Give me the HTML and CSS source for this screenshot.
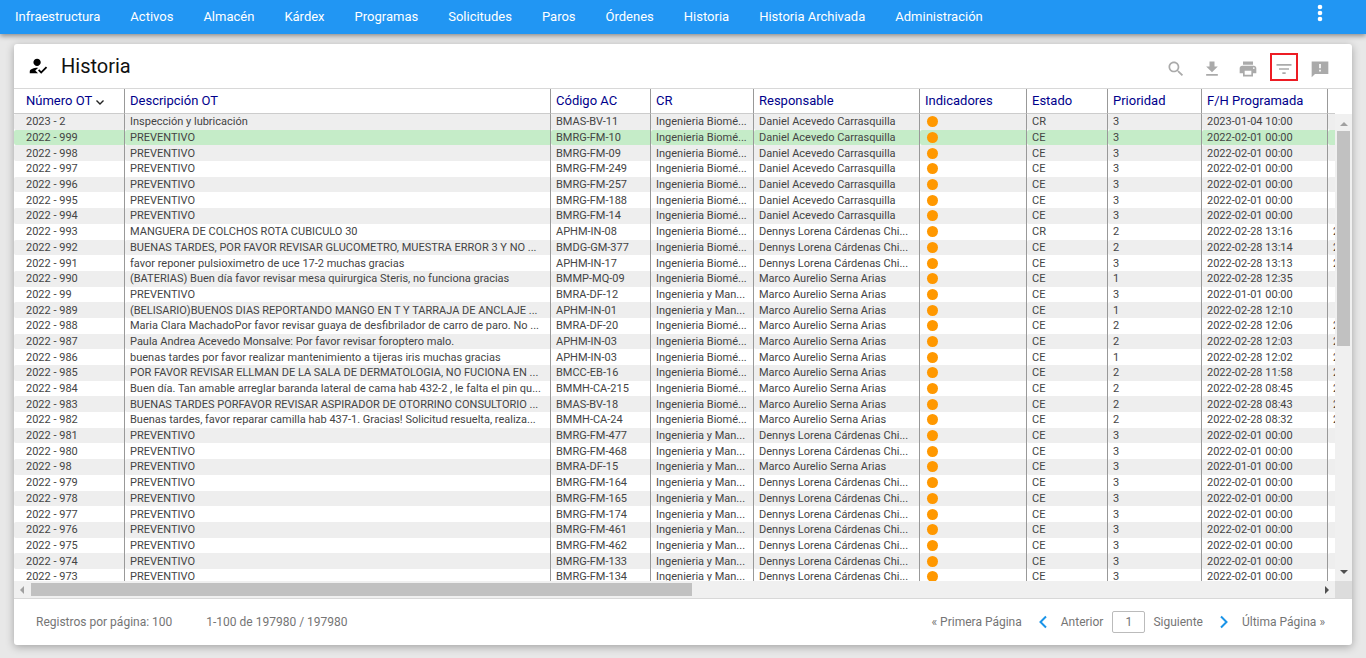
FILE: index.html
```html
<!DOCTYPE html>
<html lang="es">

<head>
    <meta charset="UTF-8">
    <meta name="viewport" content="width=device-width, initial-scale=1.0">
    <title>Historia</title>
    <link rel="stylesheet" href="styles.css">
</head>

<body>
    <nav class="navbar">
        <a href="#">Infraestructura</a>
        <a href="#">Activos</a>
        <a href="#">Almacén</a>
        <a href="#">Kárdex</a>
        <a href="#">Programas</a>
        <a href="#">Solicitudes</a>
        <a href="#">Paros</a>
        <a href="#">Órdenes</a>
        <a href="#">Historia</a>
        <a href="#">Historia Archivada</a>
        <a href="#">Administración</a>
        <button class="more-btn" aria-label="Más opciones">
            <svg width="24" height="24" viewBox="0 0 24 24" fill="currentColor"><circle cx="12" cy="6" r="2.3"/><circle cx="12" cy="12" r="2.3"/><circle cx="12" cy="18" r="2.3"/></svg>
        </button>
    </nav>

    <main class="card">
        <header class="card-header">
            <svg class="title-icon" width="22" height="22" viewBox="0 0 24 24"><path d="M9 17l3-2.94c-.39-.04-.68-.06-1-.06-2.67 0-8 1.34-8 4v2h9l-3-3zm2-5c2.21 0 4-1.79 4-4s-1.79-4-4-4-4 1.79-4 4 1.79 4 4 4zM15.47 20.5L12 17l1.4-1.41 2.07 2.08 5.13-5.17 1.4 1.41z"/></svg>
            <h1>Historia</h1>
            <div class="tools">
                <button class="tool-btn" aria-label="Buscar">
                    <svg viewBox="0 0 24 24"><path d="M15.5 14h-.79l-.28-.27C15.41 12.59 16 11.11 16 9.5 16 5.91 13.09 3 9.5 3S3 5.91 3 9.5 5.91 16 9.5 16c1.61 0 3.09-.59 4.23-1.57l.27.28v.79l5 4.99L20.49 19l-4.99-5zm-6 0C7.01 14 5 11.99 5 9.5S7.01 5 9.5 5 14 7.01 14 9.5 11.99 14 9.5 14z"/></svg>
                </button>
                <button class="tool-btn" aria-label="Descargar">
                    <svg viewBox="0 0 24 24"><path d="M19 9h-4V3H9v6H5l7 7 7-7zM5 18v2h14v-2H5z"/></svg>
                </button>
                <button class="tool-btn" aria-label="Imprimir">
                    <svg viewBox="0 0 24 24"><path d="M19 8H5c-1.66 0-3 1.34-3 3v6h4v4h12v-4h4v-6c0-1.66-1.34-3-3-3zm-3 11H8v-5h8v5zm3-7c-.55 0-1-.45-1-1s.45-1 1-1 1 .45 1 1-.45 1-1 1zm-1-9H6v4h12V3z"/></svg>
                </button>
                <button class="tool-btn marked" aria-label="Filtrar">
                    <svg viewBox="0 0 24 24"><path d="M10 18h4v-2h-4v2zM3 6v2h18V6H3zm3 7h12v-2H6v2z"/></svg>
                </button>
                <button class="tool-btn" aria-label="Comentarios">
                    <svg viewBox="0 0 24 24"><path d="M22 3H2v19l4-4h16V3zm-9 12h-2v-2h2v2zm0-4h-2V6h2v5z"/></svg>
                </button>
            </div>
        </header>

        <div class="grid">
            <div class="grid-view">
                <table>
                    <colgroup>
                        <col class="col-ot">
                        <col>
                        <col class="col-code">
                        <col class="col-cr">
                        <col class="col-resp">
                        <col class="col-ind">
                        <col class="col-state">
                        <col class="col-prio">
                        <col class="col-date">
                        <col class="col-last">
                    </colgroup>
                    <thead>
                        <tr>
                            <th>Número OT <svg class="sort" width="10" height="10" viewBox="0 0 10 10"><path d="M1.500 3.500l3.500 3.500 3.500-3.500"/></svg></th>
                            <th>Descripción OT</th>
                            <th>Código AC</th>
                            <th>CR</th>
                            <th>Responsable</th>
                            <th>Indicadores</th>
                            <th>Estado</th>
                            <th>Prioridad</th>
                            <th>F/H Programada</th>
                            <th></th>
                        </tr>
                    </thead>
                    <tbody id="history-body">
                        <!-- Rows are added by script.js -->
                    </tbody>
                </table>
            </div>
            <div class="scroll-y">
                <span class="arrow up"></span>
                <span class="thumb-y"></span>
                <span class="arrow down"></span>
            </div>
            <div class="scroll-x">
                <span class="arrow left"></span>
                <span class="thumb-x"></span>
                <span class="arrow right"></span>
            </div>
            <div class="corner"></div>
        </div>

        <footer class="card-footer">
            <span>Registros por página: 100</span>
            <span>1-100 de 197980 / 197980</span>
            <div class="pager">
                <a href="#">« Primera Página</a>
                <a href="#" class="step"><svg class="chev" width="8" height="14" viewBox="0 0 8 14"><path d="M7 1.500L1.500 7 7 12.500"/></svg>Anterior</a>
                <input type="text" value="1" aria-label="Página">
                <a href="#" class="step next">Siguiente<svg class="chev" width="8" height="14" viewBox="0 0 8 14"><path d="M1 1.500L6.500 7 1 12.500"/></svg></a>
                <a href="#">Última Página »</a>
            </div>
        </footer>
    </main>

    <script src="script.js"></script>
</body>

</html>
```
FILE: styles.css
```css
* {
    box-sizing: border-box;
}

body {
    margin: 0;
    min-height: 100vh;
    background: #e8e8e8;
    font-family: Roboto, sans-serif;
    color: #444;
}

a {
    color: inherit;
    text-decoration: none;
}

button {
    border: none;
    background: none;
    padding: 0;
    cursor: pointer;
}

.navbar {
    display: flex;
    align-items: center;
    gap: 30px;
    height: 34px;
    padding: 0 34px 2px 15px;
    background: #2196f3;
    box-shadow: 0 2px 5px rgba(0, 0, 0, 0.4);
    color: white;
    font-size: 13px;
}

.more-btn {
    height: 24px;
    margin: 0 0 6px auto;
    color: white;
}

.card {
    margin: 10px 14px 13px;
    background: white;
    border-radius: 3px;
    box-shadow: 0 2px 8px rgba(0, 0, 0, 0.3);
}

.card-header {
    display: flex;
    align-items: center;
    height: 45px;
    padding: 0 18px 0 13px;
    border-bottom: 1px solid #d8d8d8;
}

.card-header h1 {
    margin: 0 auto 0 12px;
    font-size: 20px;
    font-weight: 400;
    color: #111;
}

.tools {
    display: flex;
    gap: 8px;
    padding-top: 2px;
}

.tool-btn {
    display: flex;
    align-items: center;
    justify-content: center;
    width: 28px;
    height: 28px;
    padding-top: 4px;
    border: 2px solid transparent;
}

.tool-btn svg {
    width: 20px;
    height: 20px;
    flex: none;
    fill: #aaa;
}

.tool-btn.marked {
    border-color: #ed1c24;
}

/* table with its own scroll bars */
.grid {
    display: grid;
    grid-template-columns: 1fr 17px;
    grid-template-rows: 492px 17px;
    border-bottom: 1px solid #d8d8d8;
}

.grid-view {
    overflow: hidden;
}

table {
    width: calc(100% + 93px);
    height: 496px;
    table-layout: fixed;
    border-collapse: separate;
    border-spacing: 0;
}

.col-ot { width: 111px; }
.col-code { width: 100px; }
.col-cr { width: 103px; }
.col-resp { width: 166px; }
.col-ind { width: 107px; }
.col-state { width: 81px; }
.col-prio { width: 94px; }
.col-date { width: 126px; }
.col-last { width: 100px; }

th,
td {
    padding: 0 0 0 5px;
    border-right: 1px solid #999;
    text-align: left;
    white-space: nowrap;
    overflow: hidden;
}

th:first-child,
td:first-child {
    padding-left: 12px;
}

th {
    height: 25px;
    padding-bottom: 2px;
    border-bottom: 1px solid #ccc;
    font-size: 13px;
    font-weight: 400;
    color: #00008b;
}

td {
    border-radius: 2px 0 0 2px;
    font-size: 11px;
    line-height: 15px;
}

tbody tr:nth-child(odd) td {
    background: #eee;
}

tbody tr.selected td {
    background: #c5ecc8;
}

.sort {
    fill: none;
    stroke: #222;
    stroke-width: 1.4;
    vertical-align: -2px;
}

.dot {
    display: block;
    width: 11px;
    height: 11px;
    margin-left: 2px;
    border-radius: 50%;
    background: #ff9800;
}

.scroll-y {
    display: flex;
    flex-direction: column;
    align-items: center;
    margin-top: 25px;
    background: #f0f0f0;
}

.scroll-x {
    display: flex;
    align-items: center;
    background: #f0f0f0;
}

.thumb-y {
    width: 13px;
    height: 46%;
    margin: 5px 0 auto;
    background: #c1c1c1;
}

.thumb-x {
    width: 50%;
    height: 13px;
    margin: 0 auto 0 5px;
    background: #c1c1c1;
}

.corner {
    background: #dcdcdc;
}

.arrow {
    border: 4px solid transparent;
}

.arrow.up {
    margin-top: 8px;
    border-top-width: 0;
    border-bottom-color: #a0a0a0;
}

.arrow.down {
    margin-bottom: 7px;
    border-top-color: #505050;
    border-bottom-width: 0;
}

.arrow.left {
    margin: 0 2px 0 6px;
    border-left-width: 0;
    border-right-color: #a0a0a0;
}

.arrow.right {
    margin-right: 6px;
    border-right-width: 0;
    border-left-color: #505050;
}

.card-footer {
    display: flex;
    align-items: center;
    gap: 34px;
    height: 46px;
    padding: 0 27px 0 22px;
    font-size: 12px;
    color: #757575;
}

.pager {
    display: flex;
    align-items: center;
    margin-left: auto;
}

.step {
    display: flex;
    align-items: center;
    gap: 14px;
    margin: 0 9px 0 17px;
}

.step.next {
    margin: 0 14px 0 8px;
    gap: 17px;
}

.chev {
    fill: none;
    stroke: #1a94e8;
    stroke-width: 2;
}

.pager input {
    width: 33px;
    height: 22px;
    padding: 0;
    border: 1px solid #bbb;
    border-radius: 2px;
    text-align: center;
    font: inherit;
    color: inherit;
}
```
FILE: script.js
```javascript
const daniel = 'Daniel Acevedo Carrasquilla';
const dennys = 'Dennys Lorena Cárdenas Chi...';
const marco = 'Marco Aurelio Serna Arias';
const bio = 'Ingenieria Biomé...';
const man = 'Ingenieria y Man...';

// number, description, code, CR, responsible, state, priority, date, next column
const rows = [
    ['2023 - 2', 'Inspección y lubricación', 'BMAS-BV-11', bio, daniel, 'CR', 3, '2023-01-04 10:00', ''],
    ['2022 - 999', 'PREVENTIVO', 'BMRG-FM-10', bio, daniel, 'CE', 3, '2022-02-01 00:00', ''],
    ['2022 - 998', 'PREVENTIVO', 'BMRG-FM-09', bio, daniel, 'CE', 3, '2022-02-01 00:00', ''],
    ['2022 - 997', 'PREVENTIVO', 'BMRG-FM-249', bio, daniel, 'CE', 3, '2022-02-01 00:00', ''],
    ['2022 - 996', 'PREVENTIVO', 'BMRG-FM-257', bio, daniel, 'CE', 3, '2022-02-01 00:00', ''],
    ['2022 - 995', 'PREVENTIVO', 'BMRG-FM-188', bio, daniel, 'CE', 3, '2022-02-01 00:00', ''],
    ['2022 - 994', 'PREVENTIVO', 'BMRG-FM-14', bio, daniel, 'CE', 3, '2022-02-01 00:00', ''],
    ['2022 - 993', 'MANGUERA DE COLCHOS ROTA CUBICULO 30', 'APHM-IN-08', bio, dennys, 'CR', 2, '2022-02-28 13:16', '2'],
    ['2022 - 992', 'BUENAS TARDES, POR FAVOR REVISAR GLUCOMETRO, MUESTRA ERROR 3 Y NO ...', 'BMDG-GM-377', bio, dennys, 'CE', 2, '2022-02-28 13:14', '2'],
    ['2022 - 991', 'favor reponer pulsioximetro de uce 17-2 muchas gracias', 'APHM-IN-17', bio, dennys, 'CE', 3, '2022-02-28 13:13', '2'],
    ['2022 - 990', '(BATERIAS) Buen día favor revisar mesa quirurgica Steris, no funciona gracias', 'BMMP-MQ-09', bio, marco, 'CE', 1, '2022-02-28 12:35', ''],
    ['2022 - 99', 'PREVENTIVO', 'BMRA-DF-12', man, marco, 'CE', 3, '2022-01-01 00:00', ''],
    ['2022 - 989', '(BELISARIO)BUENOS DIAS REPORTANDO MANGO EN T Y TARRAJA DE ANCLAJE ...', 'APHM-IN-01', man, marco, 'CE', 1, '2022-02-28 12:10', ''],
    ['2022 - 988', 'Maria Clara MachadoPor favor revisar guaya de desfibrilador de carro de paro. No ...', 'BMRA-DF-20', bio, marco, 'CE', 2, '2022-02-28 12:06', '2'],
    ['2022 - 987', 'Paula Andrea Acevedo Monsalve: Por favor revisar foroptero malo.', 'APHM-IN-03', bio, marco, 'CE', 2, '2022-02-28 12:03', '2'],
    ['2022 - 986', 'buenas tardes por favor realizar mantenimiento a tijeras iris muchas gracias', 'APHM-IN-03', bio, marco, 'CE', 1, '2022-02-28 12:02', '2'],
    ['2022 - 985', 'POR FAVOR REVISAR ELLMAN DE LA SALA DE DERMATOLOGIA, NO FUCIONA EN ...', 'BMCC-EB-16', bio, marco, 'CE', 2, '2022-02-28 11:58', '2'],
    ['2022 - 984', 'Buen día. Tan amable arreglar baranda lateral de cama hab 432-2 , le falta el pin qu...', 'BMMH-CA-215', bio, marco, 'CE', 2, '2022-02-28 08:45', '2'],
    ['2022 - 983', 'BUENAS TARDES PORFAVOR REVISAR ASPIRADOR DE OTORRINO CONSULTORIO ...', 'BMAS-BV-18', bio, marco, 'CE', 2, '2022-02-28 08:43', '2'],
    ['2022 - 982', 'Buenas tardes, favor reparar camilla hab 437-1. Gracias! Solicitud resuelta, realiza...', 'BMMH-CA-24', bio, marco, 'CE', 2, '2022-02-28 08:32', '2'],
    ['2022 - 981', 'PREVENTIVO', 'BMRG-FM-477', man, dennys, 'CE', 3, '2022-02-01 00:00', ''],
    ['2022 - 980', 'PREVENTIVO', 'BMRG-FM-468', man, dennys, 'CE', 3, '2022-02-01 00:00', ''],
    ['2022 - 98', 'PREVENTIVO', 'BMRA-DF-15', man, marco, 'CE', 3, '2022-01-01 00:00', ''],
    ['2022 - 979', 'PREVENTIVO', 'BMRG-FM-164', man, dennys, 'CE', 3, '2022-02-01 00:00', ''],
    ['2022 - 978', 'PREVENTIVO', 'BMRG-FM-165', man, dennys, 'CE', 3, '2022-02-01 00:00', ''],
    ['2022 - 977', 'PREVENTIVO', 'BMRG-FM-174', man, dennys, 'CE', 3, '2022-02-01 00:00', ''],
    ['2022 - 976', 'PREVENTIVO', 'BMRG-FM-461', man, dennys, 'CE', 3, '2022-02-01 00:00', ''],
    ['2022 - 975', 'PREVENTIVO', 'BMRG-FM-462', man, dennys, 'CE', 3, '2022-02-01 00:00', ''],
    ['2022 - 974', 'PREVENTIVO', 'BMRG-FM-133', man, dennys, 'CE', 3, '2022-02-01 00:00', ''],
    ['2022 - 973', 'PREVENTIVO', 'BMRG-FM-134', man, dennys, 'CE', 3, '2022-02-01 00:00', '']
];

const body = document.getElementById('history-body');

rows.forEach((r, i) => {
    const row = document.createElement('tr');
    if (i === 1) row.className = 'selected';
    row.innerHTML = `
        <td>${r[0]}</td>
        <td>${r[1]}</td>
        <td>${r[2]}</td>
        <td>${r[3]}</td>
        <td>${r[4]}</td>
        <td><span class="dot"></span></td>
        <td>${r[5]}</td>
        <td>${r[6]}</td>
        <td>${r[7]}</td>
        <td>${r[8]}</td>
    `;
    body.appendChild(row);
});
```
